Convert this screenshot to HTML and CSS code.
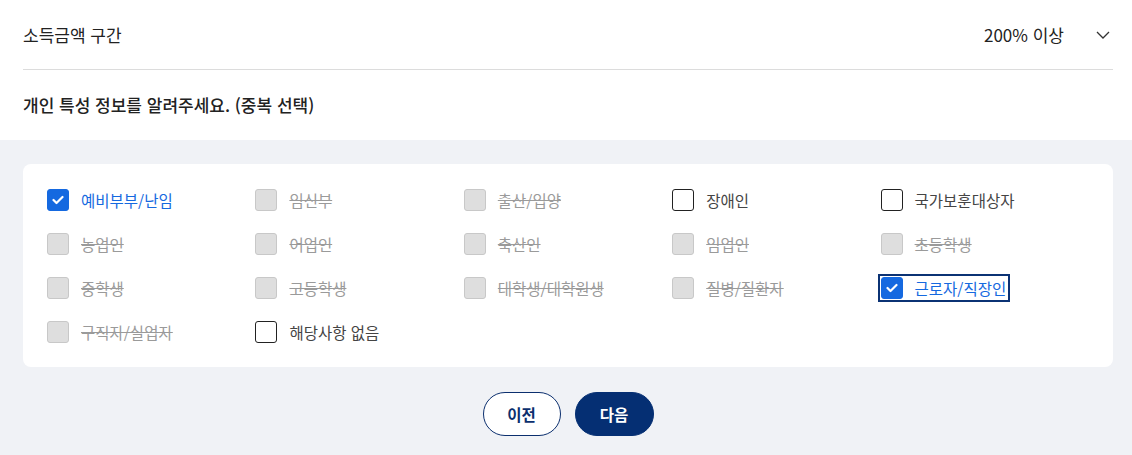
FILE: index.html
```html
<!DOCTYPE html>
<html lang="ko">
<head>
<meta charset="utf-8">
<link rel="stylesheet" href="styles.css">
</head>
<body>
<div class="page">
  <section class="top">
    <div class="select-row">
      <span class="select-label">소득금액 구간</span>
      <span class="select-value">200% 이상</span>
      <svg class="chevron" width="14" height="8" viewBox="0 0 14 8"><path d="M1 1l6 6 6-6" fill="none" stroke="#333" stroke-width="1.3"/></svg>
    </div>
    <div class="question">개인 특성 정보를 알려주세요. (중복 선택)</div>
  </section>
  <section class="bottom">
    <div class="card">
      <div class="grid">
        <label class="opt checked"><span class="box"><svg width="12" height="10" viewBox="0 0 12 10"><path d="M1.5 5l3 3 6-6" fill="none" stroke="#fff" stroke-width="2.2" stroke-linecap="round" stroke-linejoin="round"/></svg></span><span class="txt">예비부부/난임</span></label>
        <label class="opt disabled"><span class="box"></span><span class="txt">임신부</span></label>
        <label class="opt disabled"><span class="box"></span><span class="txt">출산/입양</span></label>
        <label class="opt"><span class="box"></span><span class="txt">장애인</span></label>
        <label class="opt"><span class="box"></span><span class="txt">국가보훈대상자</span></label>

        <label class="opt disabled"><span class="box"></span><span class="txt">농업인</span></label>
        <label class="opt disabled"><span class="box"></span><span class="txt">어업인</span></label>
        <label class="opt disabled"><span class="box"></span><span class="txt">축산인</span></label>
        <label class="opt disabled"><span class="box"></span><span class="txt">임업인</span></label>
        <label class="opt disabled"><span class="box"></span><span class="txt">초등학생</span></label>

        <label class="opt disabled"><span class="box"></span><span class="txt">중학생</span></label>
        <label class="opt disabled"><span class="box"></span><span class="txt">고등학생</span></label>
        <label class="opt disabled"><span class="box"></span><span class="txt">대학생/대학원생</span></label>
        <label class="opt disabled"><span class="box"></span><span class="txt">질병/질환자</span></label>
        <label class="opt checked focused"><span class="box"><svg width="12" height="10" viewBox="0 0 12 10"><path d="M1.5 5l3 3 6-6" fill="none" stroke="#fff" stroke-width="2.2" stroke-linecap="round" stroke-linejoin="round"/></svg></span><span class="txt">근로자/직장인</span></label>

        <label class="opt disabled"><span class="box"></span><span class="txt">구직자/실업자</span></label>
        <label class="opt"><span class="box"></span><span class="txt">해당사항 없음</span></label>
      </div>
    </div>
    <div class="actions">
      <button class="btn prev">이전</button>
      <button class="btn next">다음</button>
    </div>
  </section>
</div>
</body>
</html>
```

FILE: styles.css
```css
* { box-sizing: border-box; }
html, body { margin: 0; padding: 0; }
body {
  font-family: "Noto Sans CJK KR", "Noto Sans", sans-serif;
  color: #222;
  background: #f0f2f6;
}
.page { width: 1132px; height: 455px; overflow: hidden; }
.top { background: #fff; padding: 0 19px 0 23px; }
.select-row {
  display: flex;
  align-items: center;
  height: 70px;
  border-bottom: 1px solid #dcdcdc;
}
.select-label { font-size: 17px; flex: 1; color: #222; }
.select-value { font-size: 17px; color: #222; }
.chevron { margin-left: 32px; margin-right: 3px; }
.question {
  height: 70px;
  display: flex;
  align-items: center;
  font-size: 17px;
  font-weight: 500;
  color: #222;
  padding-bottom: 2px;
}
.bottom { background: #f0f2f6; padding: 24px 19px 20px 23px; }
.card {
  background: #fff;
  border-radius: 8px;
  padding: 25px 24px 24px 24px;
}
.grid {
  display: grid;
  grid-template-columns: repeat(5, 1fr);
  row-gap: 22px;
}
.opt { display: flex; align-items: center; height: 22px; }
.box {
  width: 22px; height: 22px;
  border: 1px solid #222;
  border-radius: 3px;
  background: #fff;
  flex: none;
  display: flex; align-items: center; justify-content: center;
  margin-right: 12px;
}
.txt { font-size: 15.5px; color: #444; line-height: 22px; }
.disabled .box { background: #dedede; border-color: #c8c8c8; }
.disabled .txt { color: #9a9a9a; text-decoration: line-through; }
.checked .box { background: #1569e0; border-color: #1569e0; }
.checked .txt { color: #1569e0; }
.focused { outline: 2px solid #0b3274; outline-offset: 1px; justify-self: start; padding-right: 1px; }
.actions {
  display: flex;
  justify-content: center;
  gap: 14px;
  margin-top: 25px;
}
.btn {
  height: 44px;
  border-radius: 22px;
  font-family: inherit;
  font-size: 15.5px;
  font-weight: 700;
  cursor: pointer;
}
.prev { width: 78px; background: #fff; color: #0b2f6e; border: 1px solid #0b2f6e; }
.next { width: 79px; background: #052f73; color: #fff; border: 1px solid #052f73; }
```
